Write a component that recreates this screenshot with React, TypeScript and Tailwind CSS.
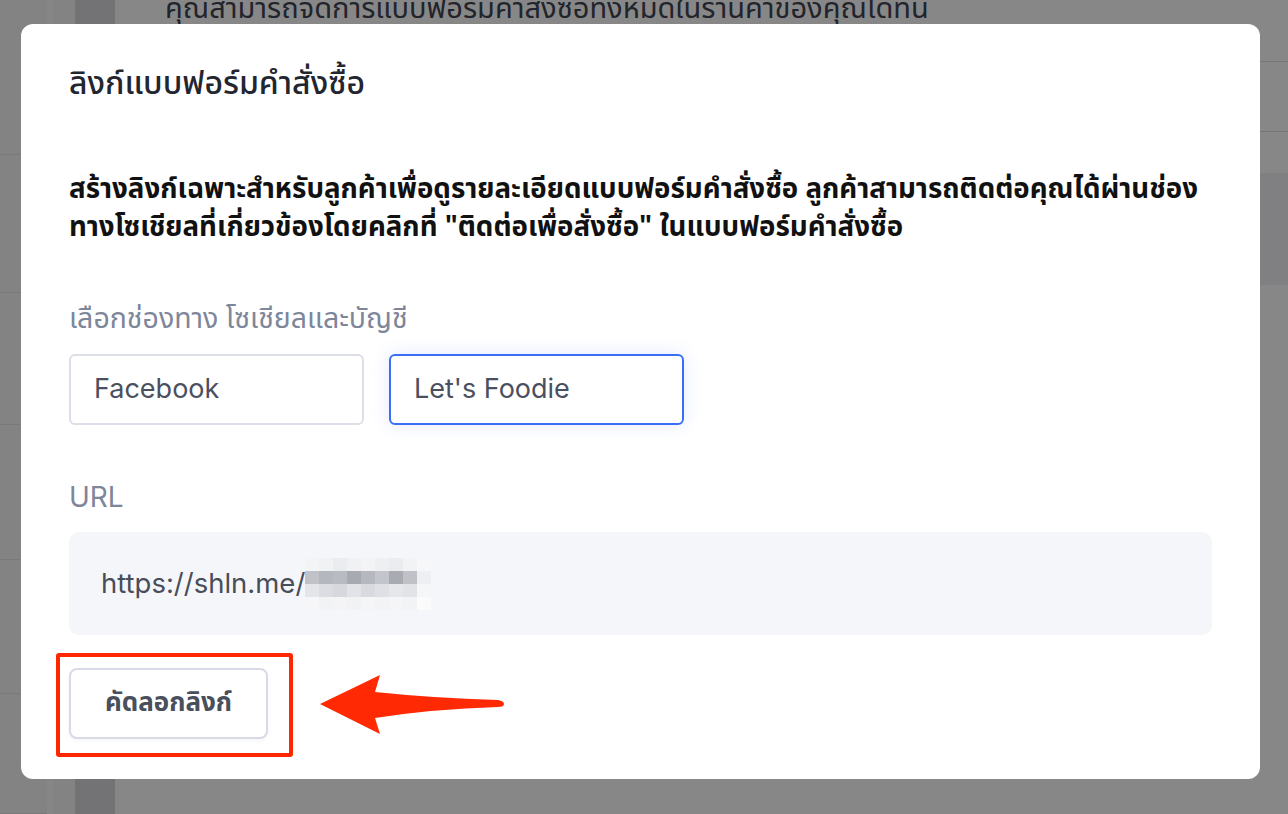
import { useState } from 'react';

const pixelRows = [
  ['#f3f4f6', '#f1f2f4', '#ebecef', '#f0f1f3', '#f4f4f6', '#eeeff1', '#ebecef', '#f2f3f5', '#f7f7f9'],
  ['#c0c2c8', '#b5b7be', '#b9bbc2', '#a8aab2', '#b6b8bf', '#c3c5cb', '#a9abb3', '#bfc1c7', '#eeeff2'],
  ['#e4e5e9', '#dcdde2', '#d6d8dd', '#e2e3e7', '#d8dadf', '#dfe0e4', '#e6e7ea', '#e2e3e7', '#f5f6f8'],
  ['#f6f6f8', '#f2f3f5', '#f4f4f6', '#f1f2f4', '#f5f5f7', '#f3f3f5', '#f5f5f7', '#f2f3f5', '#fbfbfc'],
];

const thai = 'font-["Noto_Sans_Thai","Noto_Sans","Liberation_Sans",sans-serif]';

function PageBehind() {
  return (
    <div className="absolute inset-0 flex bg-white">
      <div className="flex w-[47px] flex-col bg-[#f8f8f8]">
        {[155, 138, 132, 135, 134, 120].map((h, i) => (
          <div key={i} className="border-b border-[#e5e7eb]" style={{ height: h }} />
        ))}
      </div>
      <div className="w-[6px] bg-[#fdfdfd]" />
      <div className="w-[22px] bg-[#f7f7f8]" />
      <div className="w-[40px] bg-[#d9dadd]" />
      <div className="flex flex-1 flex-col">
        <div className={`h-[62px] overflow-hidden border-b border-[#dfe1e6] pl-[50px] text-[29px] leading-[18px] text-[#3f4452] ${thai}`}>
          คุณสามารถจัดการแบบฟอร์มคำสั่งซื้อทั้งหมดในร้านค้าของคุณได้ที่นี่
        </div>
        <div className="h-[70px] border-b border-[#dfe1e6]" />
        <div className="h-[41px]" />
        <div className="h-[112px] bg-[#f1f2f5]" />
        <div className="flex-1" />
      </div>
    </div>
  );
}

function Arrow() {
  return (
    <svg className="absolute left-[249px] top-[4px]" width="190" height="66" viewBox="318 672 190 66">
      <path
        d="M320 704 L380 675 L375 692 Q432 698 498 700 Q504 701 504 704 Q504 707 498 707 Q432 709 375 718 L380 734 Z"
        fill="#ff2a04"
      />
    </svg>
  );
}

export default function App() {
  const [channel, setChannel] = useState<'facebook' | 'page'>('page');

  return (
    <div className="relative h-[814px] w-full overflow-hidden">
      <PageBehind />

      {/* Backdrop + modal */}
      <div className="absolute inset-0 bg-black/[0.47] pl-[21px] pt-[24px]">
        <div className={`flex h-[755px] w-[1239px] flex-col rounded-[12px] bg-white px-[48px] pt-[40px] ${thai}`}>
          <h2 className="h-[40px] text-[32px] font-medium leading-[40px] text-[#23262f]">ลิงก์แบบฟอร์มคำสั่งซื้อ</h2>

          <p className="mt-[67px] text-[27.7px] font-bold leading-[38px] text-[#111111]">
            สร้างลิงก์เฉพาะสำหรับลูกค้าเพื่อดูรายละเอียดแบบฟอร์มคำสั่งซื้อ ลูกค้าสามารถติดต่อคุณได้ผ่านช่อง
            <br />
            ทางโซเชียลที่เกี่ยวข้องโดยคลิกที่ "ติดต่อเพื่อสั่งซื้อ" ในแบบฟอร์มคำสั่งซื้อ
          </p>

          <div className="mt-[57px] text-[28.5px] leading-[32px] text-[#7e869a]">เลือกช่องทาง โซเชียลและบัญชี</div>

          <div className="mt-[18px] flex gap-[25px]">
            <button
              onClick={() => setChannel('facebook')}
              className={`flex h-[71px] w-[295px] items-center rounded-[6px] border-2 bg-white pl-[23px] font-['Inter',sans-serif] text-[27px] text-[#4b5060] ${
                channel === 'facebook' ? 'border-[#3b6ef6] shadow-[0_0_18px_rgba(59,110,246,0.15)]' : 'border-[#dcdee8]'
              }`}
            >
              Facebook
            </button>
            <button
              onClick={() => setChannel('page')}
              className={`flex h-[71px] w-[295px] items-center rounded-[6px] border-2 bg-white pl-[23px] font-['Inter',sans-serif] text-[27px] text-[#4b5060] ${
                channel === 'page' ? 'border-[#3b6ef6] shadow-[0_0_18px_rgba(59,110,246,0.15)]' : 'border-[#dcdee8]'
              }`}
            >
              Let's Foodie
            </button>
          </div>

          <div className="mt-[56px] font-['Inter',sans-serif] text-[28px] leading-[32px] text-[#7e869a]">URL</div>

          <div className="mt-[19px] flex h-[103px] items-center rounded-[10px] bg-[#f5f6fa] pl-[32px] font-['Inter',sans-serif] text-[27.5px] text-[#484d5a]">
            <span>https://shln.me/</span>
            <div className="flex flex-col">
              {pixelRows.map((row, r) => (
                <div key={r} className="flex">
                  {row.map((c, i) => (
                    <div key={i} className="h-[13px] w-[14px]" style={{ background: c }} />
                  ))}
                </div>
              ))}
            </div>
          </div>

          <div className="relative mt-[33px] self-start">
            <button className="flex h-[71px] w-[199px] items-center justify-center rounded-[8px] border-2 border-[#d8dbe6] bg-white text-[26px] font-bold text-[#4a4f5c] shadow-[0_2px_4px_rgba(0,0,0,0.04)]">
              คัดลอกลิงก์
            </button>
            {/* highlight box + pointer */}
            <div className="pointer-events-none absolute left-[-13px] top-[-15px] h-[104px] w-[237px] rounded-[3px] border-[4px] border-[#ff2600]" />
            <Arrow />
          </div>
        </div>
      </div>
    </div>
  );
}
